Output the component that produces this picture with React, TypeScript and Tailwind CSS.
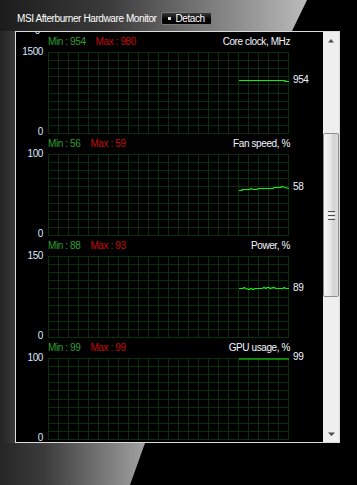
import React from 'react';

interface Series {
  title: string;
  min: number;
  max: number;
  top: number;
  value: number;
  valueY: number;
  points: string;
}

const series: Series[] = [
  {
    title: 'Core clock, MHz',
    min: 954,
    max: 980,
    top: 1500,
    value: 954,
    valueY: 28,
    points: '191,28.5 237,28.5 237,29.5 241,29.5',
  },
  {
    title: 'Fan speed, %',
    min: 56,
    max: 59,
    top: 100,
    value: 58,
    valueY: 33,
    points:
      '191,36.5 194,36.5 194,35.5 202,35.5 203,34.5 205,35.5 209,35.5 210,34.5 212,34.5 213,34.5 225,34.5 226,33.5 233,33.5 234,32.5 237,33.5 241,34.5',
  },
  {
    title: 'Power, %',
    min: 88,
    max: 93,
    top: 150,
    value: 89,
    valueY: 32,
    points:
      '191,32.5 195,32.5 196,31.5 198,32.5 201,33.5 203,32.5 205,33.5 207,32.5 214,32.5 216,31.5 218,32.5 219,31.5 221,31.5 222,32.5 226,31.5 228,32.5 235,32.5 236,31.5 238,32.5 241,32.5',
  },
  {
    title: 'GPU usage, %',
    min: 99,
    max: 99,
    top: 100,
    value: 99,
    valueY: -1,
    points: '191,1 241,1',
  },
];

const gridX = Array.from({ length: 25 }, (_, i) => i * 10 + 0.5);
const gridY = Array.from({ length: 11 }, (_, i) => Math.round(i * 8.1) + 0.5);

const Graph: React.FC<{ s: Series }> = ({ s }) => (
  <div className="h-[102px] flex flex-col">
    {/* header: min / max and the series name */}
    <div className="h-[20px] flex items-start pt-[4px] pl-[32px] pr-[33px] leading-[12px]">
      <span className="text-[#2f9f2f]">Min : {s.min}</span>
      <span className="ml-[10px] text-[#c40c0c]">Max : {s.max}</span>
      <span className="ml-auto text-[#f4f6ff]">{s.title}</span>
    </div>
    <div className="h-[82px] flex">
      <div className="w-[32px] h-[82px] flex flex-col justify-between items-end pr-[5px] leading-[12px] text-[#dde8ff]">
        <span className="-mt-[6px]">{s.top}</span>
        <span className="-mb-[4px]">0</span>
      </div>
      <svg width="241" height="82" viewBox="0 0 241 82" className="block shrink-0">
        {gridX.map((x) => (
          <line key={'x' + x} x1={x} y1={0} x2={x} y2={82} stroke="#0a2f0b" strokeWidth="1" />
        ))}
        {gridY.map((y) => (
          <line key={'y' + y} x1={0} y1={y} x2={241} y2={y} stroke="#0a2f0b" strokeWidth="1" />
        ))}
        <polyline points={s.points} fill="none" stroke="#12f012" strokeWidth="1.2" />
      </svg>
      <div className="relative flex-1">
        <span
          className="absolute left-[4px] leading-[12px] text-[#eef2ff]"
          style={{ top: s.valueY - 6 }}
        >
          {s.value}
        </span>
      </div>
    </div>
  </div>
);

const Scrollbar: React.FC = () => (
  <div className="w-[16px] h-full flex flex-col bg-[#efefef]">
    <div className="h-[17px] flex items-start justify-center pt-[7px]">
      <svg width="6" height="4" viewBox="0 0 6 4">
        <polygon points="3,0 6,3.5 0,3.5" fill="#4a4a4a" />
      </svg>
    </div>
    <div className="h-[84px]" />
    <div className="h-[164px] rounded-[2px] border border-[#8e8e8e] bg-[linear-gradient(to_right,#f6f6f6,#e8e8e8_45%,#d2d2d2_70%,#dedede)] flex items-center justify-center">
      <div className="flex flex-col gap-[1px] w-[7px]">
        <div className="h-[1px] bg-[#4d4d4d]" />
        <div className="h-[1px] bg-[#fafafa]" />
        <div className="h-[1px] bg-[#4d4d4d]" />
        <div className="h-[1px] bg-[#fafafa]" />
        <div className="h-[1px] bg-[#4d4d4d]" />
      </div>
    </div>
    <div className="flex-1" />
    <div className="h-[17px] flex items-end justify-center pb-[6px]">
      <svg width="7" height="4" viewBox="0 0 7 4">
        <polygon points="0,0.5 7,0.5 3.5,4" fill="#4a4a4a" />
      </svg>
    </div>
  </div>
);

export default function App() {
  return (
    <div className="w-[357px] h-[485px] bg-black flex flex-col overflow-hidden font-['Liberation_Sans',Arial,sans-serif] text-[10px] tracking-[-0.4px]">
      {/* title band */}
      <div className="h-[31px] shrink-0 bg-[linear-gradient(to_right,#1c1c1c,#3a3a3a_30%,#8a8a8a_65%,#dcdcdc)] [clip-path:polygon(0_0,307px_0,292px_100%,0_100%)] flex items-center pl-[17px] pt-[6px]">
        <span className="text-white leading-[12px]">MSI Afterburner Hardware Monitor</span>
        <button className="ml-[5px] h-[13px] px-[6px] flex items-center gap-[4px] rounded-[2px] border border-[#7a7a7a] bg-[linear-gradient(to_bottom,#3a3a3a,#050505_55%,#000)] text-white leading-[11px]">
          <span className="w-[3px] h-[3px] bg-[#e0e0e0]" />
          Detach
        </button>
      </div>

      <div className="h-[412px] shrink-0 flex">
        <div className="w-[15px] bg-[linear-gradient(to_right,#242424,#3a3a3a)]" />
        <div className="w-[325px] border border-[#dcdcdc] flex">
          <div className="w-[307px] h-[410px] overflow-hidden bg-black">
            <div className="-mt-[7px] -mb-[5px] w-[32px] pr-[8px] text-right leading-[12px] text-[#dde8ff]">0</div>
            {series.map((s) => (
              <Graph key={s.title} s={s} />
            ))}
          </div>
          <Scrollbar />
        </div>
        <div className="flex-1" />
      </div>

      {/* lower band */}
      <div className="h-[42px] shrink-0 bg-[linear-gradient(to_right,#262626,#3c3c3c_30%,#a6a6a6)] [clip-path:polygon(0_0,145px_0,130px_100%,0_100%)] w-[150px]" />
    </div>
  );
}
